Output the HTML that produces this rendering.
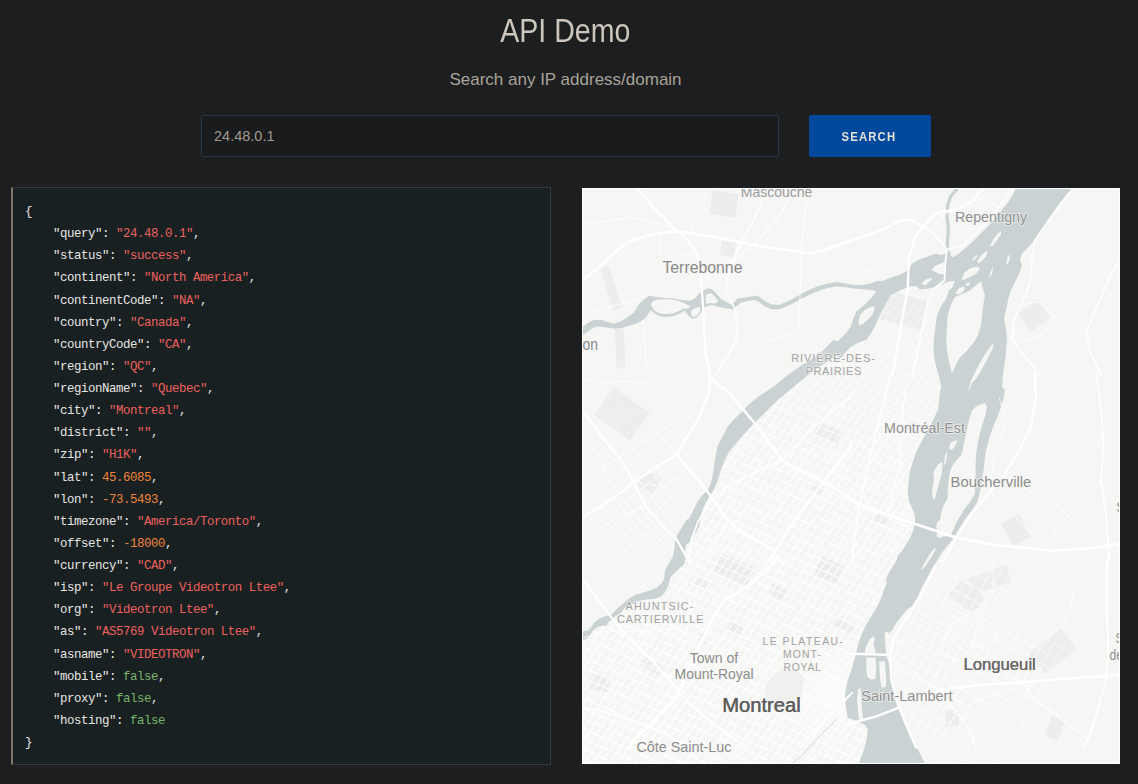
<!DOCTYPE html>
<html lang="en">
<head>
<meta charset="utf-8">
<title>API Demo</title>
<style>
html,body{margin:0;padding:0;}
body{width:1138px;height:784px;overflow:hidden;background:#1c1e20;position:relative;font-family:"Liberation Sans",sans-serif;}
h1{position:absolute;left:0;top:8px;width:1131px;margin:0;text-align:center;font-weight:400;font-size:33.5px;line-height:46px;color:#cdc6bd;white-space:nowrap;}
h1 span{display:inline-block;transform:scaleX(.852);transform-origin:50% 50%;}
.sub{position:absolute;left:0;top:67px;width:1131px;margin:0;text-align:center;font-size:17px;line-height:26px;color:#aaa399;white-space:nowrap;}
.inp{position:absolute;left:201px;top:115px;width:578px;height:42px;box-sizing:border-box;border:1px solid #27364a;border-radius:2px;background:#191b1d;color:#a09990;font-size:14.5px;line-height:41px;padding-left:12px;}
.btn{position:absolute;left:809px;top:115px;width:122px;height:42px;background:#02489c;border-radius:2px;color:#e6e2dc;font-weight:700;font-size:12.8px;letter-spacing:1.3px;line-height:43.5px;text-align:center;}
.btn span{display:inline-block;transform:scaleX(.885);transform-origin:50% 50%;margin-left:-2px}
pre{position:absolute;left:11px;top:187px;width:540px;height:578px;box-sizing:border-box;margin:0;border:1px solid #363c3e;border-left:2px solid #7d7366;background:#182022;color:#e8e6e3;font-family:"Liberation Mono",monospace;font-size:12.4px;letter-spacing:-.441px;line-height:22.13px;padding:13px 0 0 12px;white-space:pre;font-weight:400}
pre b{font-weight:400}
.s{color:#ee605e}.n{color:#ef8439}.k{color:#79b36a}
#map{position:absolute;left:582px;top:188px;width:538px;height:576px;background:#f6f6f4;overflow:hidden;}
#map svg{position:absolute;left:0;top:0;display:block}
</style>
</head>
<body>
<h1><span>API Demo</span></h1>
<p class="sub">Search any IP address/domain</p>
<div class="inp">24.48.0.1</div>
<div class="btn"><span>SEARCH</span></div>
<pre>{
    "query"<b>: <span class="s">"24.48.0.1"</span>,</b>
    "status"<b>: <span class="s">"success"</span>,</b>
    "continent"<b>: <span class="s">"North America"</span>,</b>
    "continentCode"<b>: <span class="s">"NA"</span>,</b>
    "country"<b>: <span class="s">"Canada"</span>,</b>
    "countryCode"<b>: <span class="s">"CA"</span>,</b>
    "region"<b>: <span class="s">"QC"</span>,</b>
    "regionName"<b>: <span class="s">"Quebec"</span>,</b>
    "city"<b>: <span class="s">"Montreal"</span>,</b>
    "district"<b>: <span class="s">""</span>,</b>
    "zip"<b>: <span class="s">"H1K"</span>,</b>
    "lat"<b>: <span class="n">45.6085</span>,</b>
    "lon"<b>: <span class="n">-73.5493</span>,</b>
    "timezone"<b>: <span class="s">"America/Toronto"</span>,</b>
    "offset"<b>: <span class="n">-18000</span>,</b>
    "currency"<b>: <span class="s">"CAD"</span>,</b>
    "isp"<b>: <span class="s">"Le Groupe Videotron Ltee"</span>,</b>
    "org"<b>: <span class="s">"Videotron Ltee"</span>,</b>
    "as"<b>: <span class="s">"AS5769 Videotron Ltee"</span>,</b>
    "asname"<b>: <span class="s">"VIDEOTRON"</span>,</b>
    "mobile"<b>: <span class="k">false</span>,</b>
    "proxy"<b>: <span class="k">false</span>,</b>
    "hosting"<b>: <span class="k">false</span></b>
}</pre>
<div id="map">
<svg width="538" height="576" viewBox="0 0 538 576">
<!--WATER-->
<defs>
<pattern id="ga" width="6.9" height="40" patternUnits="userSpaceOnUse" patternTransform="rotate(35)"><rect x="0" y="0" width="1" height="40" fill="#fff"/></pattern>
<pattern id="gb" width="40" height="9.3" patternUnits="userSpaceOnUse" patternTransform="rotate(24)"><rect x="0" y="0" width="40" height="1" fill="#fff"/></pattern>
<pattern id="gc" width="13" height="40" patternUnits="userSpaceOnUse" patternTransform="rotate(52)"><rect x="0" y="0" width="1" height="40" fill="#fff"/></pattern>
<pattern id="gd" width="40" height="15" patternUnits="userSpaceOnUse" patternTransform="rotate(52)"><rect x="0" y="0" width="40" height="1" fill="#fff"/></pattern>
<pattern id="ge" width="9" height="40" patternUnits="userSpaceOnUse" patternTransform="rotate(28)"><rect x="0" y="0" width="1" height="40" fill="#fff"/></pattern>
<pattern id="gf" width="40" height="12" patternUnits="userSpaceOnUse" patternTransform="rotate(28)"><rect x="0" y="0" width="40" height="1" fill="#fff"/></pattern>
<clipPath id="cisl"><path d="M0 600 L0 451.4 L-0.5 453.3 L3.2 451.6 L6.4 449.5 L8.6 446.3 L10.7 443.1 L12.9 440.9 L16.1 438.8 L20.4 437.7 L24.6 437.7 L26.8 433.4 L31.1 431.8 L32.1 429.1 L37.5 425.9 L40.7 422.7 L42.9 419.5 L50 416.3 L55.7 413.4 L61.4 412 L67.1 411.3 L74.3 410.6 L80 407.7 L84.3 402 L87.1 394.9 L88.6 389.1 L92.9 384.9 L97.1 380.6 L102.1 376.3 L103.6 370.6 L102.9 363.4 L104.3 356.3 L108.6 354 L112.9 346.3 L117.1 339.1 L118.6 330.6 L120 323.4 L122.9 316.3 L127.1 309.1 L130.7 303.4 L134.3 296.3 L137.1 287.7 L140 279.1 L143.6 270.6 L147.1 263.4 L148.6 262 L155.7 253.4 L162.9 244.9 L170 237.7 L178.6 229.1 L187.1 220.6 L195.7 212 L202.9 206.3 L211.4 199.1 L220 192 L228.6 184.9 L237.1 179.1 L245.7 173.4 L254.3 167.7 L258.6 170.6 L262.9 164.9 L268.6 159.1 L275.7 154.9 L284.3 152 L288.6 145.7 L292.9 138.6 L297.1 128.6 L302.9 117.1 L308.6 107.1 L317.1 102.9 L327.1 98.6 L334.3 97.9 L337.9 101.4 L345.7 100.7 L354.3 98.6 L362.9 95 L370 92.9 L372.9 92.9 L370 100 L367.1 102 L364.3 110.6 L358.6 119.1 L355 127.7 L353.6 137.7 L352.1 149.1 L351.4 159.1 L352.1 169.1 L354.3 179.1 L357.1 189.1 L359.3 199.1 L357.9 204 L357.1 212.6 L356.4 221.1 L352.9 228.3 L349.3 235.4 L342.9 246.9 L338.6 255.4 L334.3 264 L330.7 274 L327.9 284 L326.4 295.4 L325.7 306 L327.1 313.1 L330 320.3 L332.9 327.4 L332.9 334.6 L331.4 341.7 L328.6 348.9 L324.3 356 L320 363.1 L315.7 367.4 L315 371.7 L311.4 377.4 L307.1 384.6 L303.6 391.7 L305 394.6 L301.4 403.1 L300 408 L297.1 415.1 L292.9 422.3 L288.6 429.4 L284.3 436.6 L280.7 443.7 L277.9 450.9 L275.7 458 L274.3 465.1 L270 479.7 L265.7 492.6 L263.6 502.6 L262.9 511.1 L264.3 521.1 L265.7 529.7 L277.1 534 L282.9 536.9 L285.7 541.1 L285 549.7 L282.9 558.3 L280 566.9 L276.4 576.9 L270 600Z"/></clipPath>
<clipPath id="clav"><path d="M0 441 L-0.5 443.6 L2.1 443.1 L5.4 442.5 L8.6 439.9 L10.7 436.6 L13.9 432.9 L18.2 430.2 L23.6 428.1 L28.9 427 L32.1 423.8 L36.4 419.5 L47.1 410.6 L52.9 407 L60 404.9 L67.1 402.7 L74.3 399.9 L80 394.9 L82.1 390.6 L82.9 382 L86.4 376.3 L90.7 369.1 L92.6 360.6 L92.9 353.4 L95.7 346.3 L100 339.1 L104.3 332 L107.1 330.6 L111.4 322 L115.7 313.4 L120 307.7 L125.7 302 L128.6 296.3 L130.7 287.7 L132.1 277.7 L133.6 267.7 L135.7 257.7 L140 249.1 L144.3 242 L144.3 240.6 L150 233.4 L158.6 224.9 L167.1 216.3 L175.7 209.1 L184.3 203.4 L192.9 197.7 L201.4 190.6 L208.6 184.9 L217.1 179.1 L225.7 173.4 L232.9 169.1 L240 163.4 L245.7 157.7 L251.4 152 L255.7 153.4 L262.9 146.3 L268.6 139.1 L271.4 130.6 L274.3 123.4 L281.4 117.7 L288.6 110.6 L295 102.7 L308.6 107.1 L-0.7 147.7 L4.3 144.9 L10 140.6 L15.7 138.4 L21.4 139.1 L27.1 139.9 L32.9 140.6 L40 139.9 L47.1 137.7 L55.7 134.9 L62.9 130.6 L67.1 124.9 L68.6 122 L72.9 125.6 L78.6 128.4 L85.7 129.1 L92.9 127.7 L98.6 124.9 L102.9 122.7 L105.7 127 L110 130.6 L114.3 129.9 L118.6 124.9 L121.4 119.9 L124.3 118.4 L130 117 L137.1 119.1 L144.3 120.6 L151.4 121.3 L154.3 118.4 L158.6 114.9 L165.7 112.7 L172.9 112 L177.1 114.1 L182.9 118.4 L190 121.3 L197.1 121.3 L204.3 118.4 L211.4 114.9 L220 110.6 L228.6 106.3 L237.1 102.7 L245.7 99.9 L254.3 98.4 L262.9 99.1 L271.4 100.6 L280 101.3 L288.6 102 L295 103.4 L308.6 107.1 L317.1 102.9 L327.1 98.6 L334.3 97.9 L337.9 101.4 L345.7 100.7 L354.3 98.6 L362.9 95 L370 92.9 L0 148Z"/></clipPath>
<clipPath id="csou"><path d="M343.6 576.9 L338.6 566.9 L332.9 555.4 L327.1 544 L322.9 534 L318.6 524 L315.7 515.4 L313.6 505.4 L311.4 495.4 L309.3 485.4 L307.1 475.4 L304.3 468 L303.6 459.4 L302.9 450.9 L302.9 443.7 L307.1 445.1 L310 442.3 L314.3 435.1 L318.6 429.4 L324.3 422.3 L330 418 L335.7 408.9 L340 398.9 L345.7 388.9 L350 380.3 L355.7 371.7 L360 364.6 L365.7 357.4 L371.4 350.3 L375.7 343.1 L380 336 L385.7 327.4 L391.4 320.3 L395.7 313.1 L399.3 296.9 L400.7 288.3 L402.1 278.3 L402.9 268.3 L405 258.3 L407.9 248.3 L411.4 238.3 L415.7 228.3 L418.6 219.7 L421.4 211.1 L422.1 207.7 L422.9 202 L420 199.1 L420.7 189.1 L422.1 179.1 L423.6 169.1 L424.3 159.1 L425 149.1 L423.6 139.1 L422.1 130.6 L424.3 120.6 L426.4 110.6 L428.6 102.9 L432.9 94.3 L437.1 85.7 L440 77.1 L437.9 71.4 L440 65.7 L445.7 60 L452.9 51.4 L458.6 42.9 L464.3 34.3 L470 25.7 L477.1 15.7 L484.3 7.1 L490 0 L560 -10 L560 600 L345 600Z"/></clipPath>
<linearGradient id="fade" x1="0.25" y1="1" x2="0.75" y2="0"><stop offset="0" stop-color="#fff" stop-opacity="1"/><stop offset=".55" stop-color="#fff" stop-opacity=".9"/><stop offset=".8" stop-color="#fff" stop-opacity=".25"/><stop offset="1" stop-color="#fff" stop-opacity="0"/></linearGradient>
<mask id="misl"><rect x="0" y="0" width="538" height="576" fill="url(#fade)"/></mask>
<radialGradient id="fl" cx="60" cy="330" r="150" gradientUnits="userSpaceOnUse"><stop offset="0" stop-color="#fff" stop-opacity=".8"/><stop offset="1" stop-color="#fff" stop-opacity="0"/></radialGradient>
<mask id="mlav"><rect x="0" y="0" width="538" height="576" fill="url(#fl)"/></mask>
<radialGradient id="fs" cx="380" cy="470" r="130" gradientUnits="userSpaceOnUse"><stop offset="0" stop-color="#fff" stop-opacity=".85"/><stop offset=".6" stop-color="#fff" stop-opacity=".6"/><stop offset="1" stop-color="#fff" stop-opacity="0"/></radialGradient>
<mask id="msou"><rect x="0" y="0" width="538" height="576" fill="url(#fs)"/></mask>
</defs>
<path d="M139.9 365.3 L172.5 380.5 L164.1 398.7 L131.5 383.5Z" fill="#eceeec"/>
<path d="M240.4 367.9 L262.1 378 L253.6 396.1 L231.9 386Z" fill="#eceeec"/>
<path d="M148.6 433 L161.2 438.9 L157.4 447 L144.8 441.1Z" fill="#eceeec"/>
<path d="M10.5 485.6 L28.3 488.7 L25.5 504.4 L7.7 501.3Z" fill="#eceeec"/>
<path d="M379.9 391.7 L402.9 411 L390.1 426.3 L367.1 407Z" fill="#eceeec"/>
<path d="M386.1 390.4 L423.7 376.7 L429.9 393.6 L392.3 407.3Z" fill="#eceeec"/>
<path d="M447.2 465.1 L478.8 440.4 L494.8 460.9 L463.2 485.6Z" fill="#eceeec"/>
<path d="M31.7 199.5 L67.8 224.7 L48.3 252.5 L12.2 227.3Z" fill="#eceeec"/>
<path d="M63.7 281.7 L79.3 290.7 L70.3 306.3 L54.7 297.3Z" fill="#eceeec"/>
<path d="M237.2 233.2 L260.7 244.1 L254.8 256.8 L231.3 245.9Z" fill="#eceeec"/>
<path d="M18.3 80.3 L26.9 77.6 L39.7 119.7 L31.1 122.4Z" fill="#eceeec"/>
<path d="M32.3 134.3 L41.3 133.8 L43.7 179.7 L34.7 180.2Z" fill="#eceeec"/>
<path d="M131.3 1.9 L156.9 6.4 L152.7 30.1 L127.1 25.6Z" fill="#eceeec"/>
<path d="M140.5 50.9 L154.3 53.3 L151.5 69.1 L137.7 66.7Z" fill="#eceeec"/>
<path d="M418.8 335.7 L436.2 325.7 L449.2 348.3 L431.8 358.3Z" fill="#eceeec"/>
<path d="M302.7 101.6 L347.1 113.5 L339.3 142.4 L294.9 130.5Z" fill="#eceeec"/>
<path d="M191.3 395.2 L205.8 401.9 L200.7 412.8 L186.2 406.1Z" fill="#eceeec"/>
<path d="M250 436.8 L255 428.2 L274 439.2 L269 447.8Z" fill="#eceeec"/>
<path d="M63.8 468.7 L81.2 478.7 L76.2 487.3 L58.8 477.3Z" fill="#eceeec"/>
<path d="M116.3 388.8 L127.1 393.9 L123.7 401.2 L112.9 396.1Z" fill="#eceeec"/>
<path d="M295.1 322.9 L308.3 327.7 L304.9 337.1 L291.7 332.3Z" fill="#eceeec"/>
<path d="M435.9 125.9 L455.5 112.1 L468.1 130.1 L448.5 143.9Z" fill="#eceeec"/>
<path d="M363 521 L377 521 L377 539 L363 539Z" fill="#eceeec"/>
<path d="M470.2 527.3 L483.3 532.1 L475.8 552.7 L462.7 547.9Z" fill="#eceeec"/>
<path d="M117.2 444.3 L126.2 448.5 L122.8 455.7 L113.8 451.5Z" fill="#eceeec"/>
<path d="M231.3 293.8 L242.1 298.9 L238.7 306.2 L227.9 301.1Z" fill="#eceeec"/>
<g clip-path="url(#cisl)"><g mask="url(#misl)"><rect width="538" height="576" fill="url(#ga)"/><rect width="538" height="576" fill="url(#gb)"/></g></g>
<g clip-path="url(#clav)"><g mask="url(#mlav)"><rect width="538" height="576" fill="url(#gc)"/><rect width="538" height="576" fill="url(#gd)"/></g></g>
<g clip-path="url(#csou)"><g mask="url(#msou)"><rect width="538" height="576" fill="url(#ge)"/><rect width="538" height="576" fill="url(#gf)"/></g></g>
<radialGradient id="dt" cx="252" cy="505" r="55" gradientUnits="userSpaceOnUse"><stop offset="0" stop-color="#fff" stop-opacity=".55"/><stop offset="1" stop-color="#fff" stop-opacity="0"/></radialGradient><ellipse cx="252" cy="505" rx="38" ry="62" transform="rotate(32 252 505)" fill="url(#dt)"/>
<path d="M183 497 L195 484 L212 480 L222 490 L220 506 L208 520 L192 522 L184 512Z" fill="#f0f1ef"/>
<path d="M490 0 L484.3 7.1 L477.1 15.7 L470 25.7 L464.3 34.3 L458.6 42.9 L452.9 51.4 L445.7 60 L440 65.7 L437.9 71.4 L440 77.1 L437.1 85.7 L432.9 94.3 L428.6 102.9 L426.4 110.6 L424.3 120.6 L422.1 130.6 L423.6 139.1 L425 149.1 L424.3 159.1 L423.6 169.1 L422.1 179.1 L420.7 189.1 L420 199.1 L422.9 202 L422.1 207.7 L421.4 211.1 L418.6 219.7 L415.7 228.3 L411.4 238.3 L407.9 248.3 L405 258.3 L402.9 268.3 L402.1 278.3 L400.7 288.3 L399.3 296.9 L395.7 313.1 L391.4 320.3 L385.7 327.4 L380 336 L375.7 343.1 L371.4 350.3 L365.7 357.4 L360 364.6 L355.7 371.7 L350 380.3 L345.7 388.9 L340 398.9 L335.7 408.9 L330 418 L324.3 422.3 L318.6 429.4 L314.3 435.1 L310 442.3 L307.1 445.1 L302.9 443.7 L302.9 450.9 L303.6 459.4 L304.3 468 L307.1 475.4 L309.3 485.4 L311.4 495.4 L313.6 505.4 L315.7 515.4 L318.6 524 L322.9 534 L327.1 544 L332.9 555.4 L338.6 566.9 L343.6 576.9 L276.4 576.9 L280 566.9 L282.9 558.3 L285 549.7 L285.7 541.1 L282.9 536.9 L277.1 534 L265.7 529.7 L264.3 521.1 L262.9 511.1 L263.6 502.6 L265.7 492.6 L270 479.7 L274.3 465.1 L275.7 458 L277.9 450.9 L280.7 443.7 L284.3 436.6 L288.6 429.4 L292.9 422.3 L297.1 415.1 L300 408 L301.4 403.1 L305 394.6 L303.6 391.7 L307.1 384.6 L311.4 377.4 L315 371.7 L315.7 367.4 L320 363.1 L324.3 356 L328.6 348.9 L331.4 341.7 L332.9 334.6 L332.9 327.4 L330 320.3 L327.1 313.1 L325.7 306 L326.4 295.4 L327.9 284 L330.7 274 L334.3 264 L338.6 255.4 L342.9 246.9 L349.3 235.4 L352.9 228.3 L356.4 221.1 L357.1 212.6 L357.9 204 L359.3 199.1 L357.1 189.1 L354.3 179.1 L352.1 169.1 L351.4 159.1 L352.1 149.1 L353.6 137.7 L355 127.7 L358.6 119.1 L364.3 110.6 L367.1 102 L370 100 L372.9 92.9 L370 70.7 L372.9 68.6 L380 62.9 L387.1 57.1 L394.3 50 L401.4 42.9 L407.1 37.1 L417.1 25.7 L421.4 20 L427.1 12.9 L431.4 5.7 L434.3 -0.7Z" fill="#cad2d3"/>
<path d="M-0.7 139.9 L5.7 134.9 L11.4 132 L20 132 L25.7 134.1 L31.4 135.6 L38.6 133.4 L45.7 129.1 L51.4 124.9 L55.7 117.7 L61.4 112 L67.1 107.7 L74.3 109.1 L82.9 109.9 L91.4 110.6 L100 112 L108.6 112.7 L112.9 110.6 L117.1 105.6 L121.4 102.7 L125.7 100.6 L130 101.3 L134.3 105.6 L138.6 110.6 L144.3 114.1 L150 117 L152.9 113.4 L155.7 110.6 L160 109.9 L168.6 108.4 L175.7 107.7 L181.4 112 L188.6 116.3 L197.1 117 L204.3 114.1 L211.4 110.6 L220 105.6 L228.6 101.3 L237.1 97.7 L245.7 95.6 L254.3 94.1 L262.9 95.6 L271.4 97 L280 97 L288.6 95.6 L295.7 92.7 L300 92.9 L310 89.3 L320 85.7 L327.1 81.4 L330 75.7 L337.1 71.4 L345.7 68.6 L352.9 65.7 L360 67.1 L365.7 64.3 L368.6 67.1 L370.7 69.3 L375.7 67.1 L376.4 93.6 L372.9 93.1 L370 92.9 L362.9 95 L354.3 98.6 L345.7 100.7 L337.9 101.4 L334.3 97.9 L327.1 98.6 L317.1 102.9 L308.6 107.1 L295 103.4 L288.6 102 L280 101.3 L271.4 100.6 L262.9 99.1 L254.3 98.4 L245.7 99.9 L237.1 102.7 L228.6 106.3 L220 110.6 L211.4 114.9 L204.3 118.4 L197.1 121.3 L190 121.3 L182.9 118.4 L177.1 114.1 L172.9 112 L165.7 112.7 L158.6 114.9 L154.3 118.4 L151.4 121.3 L144.3 120.6 L137.1 119.1 L130 117 L124.3 118.4 L121.4 119.9 L118.6 124.9 L114.3 129.9 L110 130.6 L105.7 127 L102.9 122.7 L98.6 124.9 L92.9 127.7 L85.7 129.1 L78.6 128.4 L72.9 125.6 L68.6 122 L67.1 124.9 L62.9 130.6 L55.7 134.9 L47.1 137.7 L40 139.9 L32.9 140.6 L27.1 139.9 L21.4 139.1 L15.7 138.4 L10 140.6 L4.3 144.9 L-0.7 147.7Z" fill="#cad2d3"/>
<path d="M-0.5 443.6 L2.1 443.1 L5.4 442.5 L8.6 439.9 L10.7 436.6 L13.9 432.9 L18.2 430.2 L23.6 428.1 L28.9 427 L32.1 423.8 L36.4 419.5 L47.1 410.6 L52.9 407 L60 404.9 L67.1 402.7 L74.3 399.9 L80 394.9 L82.1 390.6 L82.9 382 L86.4 376.3 L90.7 369.1 L92.6 360.6 L92.9 353.4 L95.7 346.3 L100 339.1 L104.3 332 L107.1 330.6 L111.4 322 L115.7 313.4 L120 307.7 L125.7 302 L128.6 296.3 L130.7 287.7 L132.1 277.7 L133.6 267.7 L135.7 257.7 L140 249.1 L144.3 242 L144.3 240.6 L150 233.4 L158.6 224.9 L167.1 216.3 L175.7 209.1 L184.3 203.4 L192.9 197.7 L201.4 190.6 L208.6 184.9 L217.1 179.1 L225.7 173.4 L232.9 169.1 L240 163.4 L245.7 157.7 L251.4 152 L255.7 153.4 L262.9 146.3 L268.6 139.1 L271.4 130.6 L274.3 123.4 L281.4 117.7 L288.6 110.6 L295 102.7 L308.6 107.1 L302.9 117.1 L297.1 128.6 L292.9 138.6 L288.6 145.7 L284.3 152 L275.7 154.9 L268.6 159.1 L262.9 164.9 L258.6 170.6 L254.3 167.7 L245.7 173.4 L237.1 179.1 L228.6 184.9 L220 192 L211.4 199.1 L202.9 206.3 L195.7 212 L187.1 220.6 L178.6 229.1 L170 237.7 L162.9 244.9 L155.7 253.4 L148.6 262 L147.1 263.4 L143.6 270.6 L140 279.1 L137.1 287.7 L134.3 296.3 L130.7 303.4 L127.1 309.1 L122.9 316.3 L120 323.4 L118.6 330.6 L117.1 339.1 L112.9 346.3 L108.6 354 L104.3 356.3 L102.9 363.4 L103.6 370.6 L102.1 376.3 L97.1 380.6 L92.9 384.9 L88.6 389.1 L87.1 394.9 L84.3 402 L80 407.7 L74.3 410.6 L67.1 411.3 L61.4 412 L55.7 413.4 L50 416.3 L42.9 419.5 L40.7 422.7 L37.5 425.9 L32.1 429.1 L31.1 431.8 L26.8 433.4 L24.6 437.7 L20.4 437.7 L16.1 438.8 L12.9 440.9 L10.7 443.1 L8.6 446.3 L6.4 449.5 L3.2 451.6 L-0.5 453.3Z" fill="#cad2d3"/>
<path d="M375.7 0 L368.6 8.6 L365.7 17.1 L365 28.6 L366.4 40 L365.7 51.4 L365 60 L367.1 65.7" fill="none" stroke="#cad2d3" stroke-width="3.2" stroke-linecap="round" stroke-linejoin="round"/>
<path d="M370 175.6 L377.1 170.6 L385.7 164.9" fill="none" stroke="#cad2d3" stroke-width="1.2" stroke-linecap="round" stroke-linejoin="round"/>
<path d="M372.9 102 L377.1 106.3 L387.1 103.4" fill="none" stroke="#cad2d3" stroke-width="2" stroke-linecap="round" stroke-linejoin="round"/>
<path d="M377.9 265.4 L385.7 266.9 L394.3 265.4" fill="none" stroke="#cad2d3" stroke-width="1.5" stroke-linecap="round" stroke-linejoin="round"/>
<path d="M191.4 592.6 L220 566.9 L254.3 531.1" fill="none" stroke="#cad2d3" stroke-width="1.3" stroke-opacity=".55" stroke-linecap="round" stroke-linejoin="round"/>
<path d="M68.6 116.3 L71.4 112.7 L77.1 111.3 L85.7 111.3 L92.9 112 L100 114.1 L105.7 117 L108.6 118.4 L105.7 120.6 L101.4 120.6 L97.1 122.7 L91.4 125.6 L84.3 126.3 L77.9 125.6 L72.9 122.7 L70 119.1Z" fill="#f6f6f4"/>
<path d="M109.3 122.7 L112.9 119.9 L117.9 119.1 L118.6 122 L116.4 126.3 L112.1 129.1 L109.3 127.7Z" fill="#f6f6f4"/>
<path d="M123.6 107 L128.6 104.9 L132.9 108.4 L136.4 113.4 L132.9 115.6 L127.1 115.1 L124 116.3Z" fill="#f6f6f4"/>
<path d="M349.3 82.1 L352.9 77.9 L360 75 L363.6 73.6 L362.1 81.4 L361.7 86.4 L357.1 85.7 L352.9 83.6Z" fill="#f6f6f4"/>
<path d="M340 95 L342.9 92.1 L350 89.7 L349.3 92.1 L343.6 97.1 L340.7 97.1Z" fill="#f6f6f4"/>
<path d="M276.4 133.4 L278.6 126.3 L282.9 122 L288.6 119.1 L292.9 118.4 L291.4 124.9 L287.1 130.6 L281.4 135.6 L277.1 137.7Z" fill="#f6f6f4"/>
<path d="M407.9 57.9 L411.4 51.4 L415.7 45.7 L419.3 42.9 L418.6 47.1 L414.3 52.9 L410.7 57.9Z" fill="#f6f6f4"/>
<path d="M395 73.6 L398.6 67.9 L402.9 64.3 L405.7 62.9 L404.3 67.9 L400 72.9 L396.4 75Z" fill="#f6f6f4"/>
<path d="M390 72.1 L394.3 67.1 L395.7 67.9 L391.4 72.9Z" fill="#f6f6f4"/>
<path d="M379.3 91.4 L382.9 84.3 L388.6 80 L395.7 78.6 L397.9 80.7 L394.3 85.7 L387.1 89.3 L381.4 92.1Z" fill="#f6f6f4"/>
<path d="M424.3 75.7 L425.7 68.6 L427.4 66.4 L427.9 70.7 L425.7 76.4Z" fill="#f6f6f4"/>
<path d="M407.1 88.6 L410 80 L411.1 79.3 L410 85.7 L407.9 89.3Z" fill="#f6f6f4"/>
<path d="M373.6 105 L377.1 100 L382.1 98.6 L382.9 101.4 L378.6 105.7 L375 106.4Z" fill="#f6f6f4"/>
<path d="M382.9 97.1 L385.7 94.6 L388.6 95 L386.4 97.9Z" fill="#f6f6f4"/>
<path d="M399.3 93.6 L394.3 97.1 L387.1 102.9 L372.9 109.1 L368.6 117.7 L365.7 127.7 L365 139.1 L364.3 150.6 L365 162 L367.1 173.4 L370 185.6 L372.9 179.1 L377.1 170.6 L384.3 163.4 L391.4 154.9 L395.7 147.7 L398.6 139.1 L400 127.7 L401.4 116.3 L402.9 107.7 L400.7 100Z" fill="#f6f6f4"/>
<path d="M386.4 202 L388.6 193.4 L395.7 179.1 L402.9 166.3 L410.7 155.6 L411.4 159.1 L405.7 170.6 L398.6 183.4 L394.3 190.6 L390 194.9 L387.1 202.7Z" fill="#f6f6f4"/>
<path d="M402.9 214.7 L405 218.3 L403.6 226.9 L400.7 235.4 L397.9 245.4 L395.7 255.4 L394.3 265.4 L393.6 275.4 L393.6 285.4 L392.9 295.4 L392.9 306 L388.6 313.1 L382.9 320.3 L378.6 327.4 L374.3 334.6 L371.4 341.7 L368.6 347.4 L360 348.9 L357.9 350.3 L354.3 348.1 L355.7 344.6 L354.3 338.9 L355 334.6 L357.9 331.7 L359.3 324.6 L361.4 317.4 L365.7 310.3 L365.7 301.1 L367.1 289.7 L367.9 284 L370 278.3 L374.3 272.6 L379.3 266.9 L380.7 261.1 L382.9 251.1 L385 241.1 L387.1 231.1 L390 222.6 L394.3 218.3Z" fill="#f6f6f4"/>
<path d="M350.7 310.4 L350 302.6 L352.1 292.6 L351.4 284 L355.7 276.9 L359.3 274 L360.7 275.4 L360 284 L357.9 292.6 L355 302.6 L352.9 311.1Z" fill="#f6f6f4"/>
<path d="M367.1 260.4 L368.6 254.7 L374.3 251.9 L375 254 L371.4 260.4 L368.6 261.9Z" fill="#f6f6f4"/>
<path d="M362.1 276.1 L362.9 268.3 L364.3 264 L365.4 264.7 L364.3 272.6 L362.9 276.9Z" fill="#f6f6f4"/>
<path d="M339.3 381 L344.3 371.7 L350 363.1 L353.1 359.6 L353.6 361.7 L348.6 370.3 L342.9 378.9 L340 381.7Z" fill="#f6f6f4"/>
<path d="M282.9 463.7 L284.3 458 L287.9 450.9 L291.4 448 L292.9 450.9 L291.4 456.6 L293.6 462.3 L293.6 465.1 L282.9 465.1Z" fill="#f6f6f4"/>
<path d="M284.3 469.4 L293.6 469.4 L294.3 479.4 L293.6 490.9 L288.6 491.6 L285 488 L284.3 479.4Z" fill="#f6f6f4"/>
<path d="M297.1 473.7 L302.9 473 L303.6 482.3 L304.3 493.7 L303.6 499.4 L299.3 499.4 L297.9 488Z" fill="#f6f6f4"/>
<path d="M276.4 501.1 L278.6 499.7 L279.3 511.1 L280 521.1 L281.4 532.6 L277.1 532.6 L275.7 521.1 L275 511.1Z" fill="#f6f6f4"/>
<!--/WATER-->
<!--ROADS-->
<g fill="none" stroke="#fff" stroke-linecap="round" stroke-linejoin="round">
<path d="M78.3 45.1 L77.1 66.4 L90.2 68.8 L113.9 64.1" stroke-width="0.9" stroke-opacity=".85"/>
<path d="M33.2 64.1 L40.3 54.6 L51 62.9 L56.9 59.3" stroke-width="0.9" stroke-opacity=".85"/>
<path d="M111.5 46.3 L110.3 33.2 L118.6 19 L123.4 4.7" stroke-width="0.9" stroke-opacity=".85"/>
<path d="M64.1 186 L62.9 142.3 L60.5 132.9" stroke-width="0.9" stroke-opacity=".85"/>
<path d="M0 135.2 L11.9 123.4 L30.8 118.6 L54.6 111.5 L71.2 104.4" stroke-width="0.9" stroke-opacity=".85"/>
<path d="M326.9 68.8 L303.2 75.9 L284.2 83 L270 85.4" stroke-width="0.9" stroke-opacity=".85"/>
<path d="M0 190.7 L21.4 195.5 L42.7 193.1 L66.4 195.5 L78.3 207.4 L104.4 250.1" stroke-width="0.9" stroke-opacity=".85"/>
<path d="M52.2 293.9 L75.9 297.5 L94.9 290.4 L111.5 271.4" stroke-width="0.9" stroke-opacity=".85"/>
<path d="M417.1 209.7 L424.2 233.4 L412.3 264.3 L407.6 304.6" stroke-width="0.9" stroke-opacity=".85"/>
<path d="M469.3 362.7 L474 337.8 L497.8 318.9 L519.1 292.8" stroke-width="0.9" stroke-opacity=".85"/>
<path d="M402.9 419.4 L393.4 443.2 L391 462.2 L402.9 471.6" stroke-width="0.9" stroke-opacity=".85"/>
<path d="M326.9 426.6 L350.7 438.4 L381.5 452.7 L402.9 462.2" stroke-width="0.9" stroke-opacity=".85"/>
<path d="M410 372 L412.3 400.5 L402.9 419.4 L383.9 426.6 L369.6 438.4 L360.2 462.2 L353 500.1" stroke-width="0.9" stroke-opacity=".85"/>
<path d="M474 372 L493 395.7 L488.3 424.2 L474 443.2 L455.1 462.2 L440.8 494.2" stroke-width="0.9" stroke-opacity=".85"/>
<path d="M493 395.7 L525 426.6" stroke-width="0.9" stroke-opacity=".85"/>
<path d="M374.4 523.8 L402.9 509.6 L421.8 504.9 L440.8 494.2" stroke-width="0.9" stroke-opacity=".85"/>
<path d="M417.1 514.3 L440.8 535.7 L459.8 552.3" stroke-width="0.9" stroke-opacity=".85"/>
<path d="M224.2 13 L221.8 35.6 L219.5 59.3 L218.3 99.6 L217.1 142.3 L227.8 156.6 L239.6 166.1" stroke-width="1" stroke-opacity=".85"/>
<path d="M134 186 L161.3 166.1 L189.8 151.8 L217.1 142.3" stroke-width="1" stroke-opacity=".85"/>
<path d="M0 35.6 L23.7 33.2 L47.4 29.7 L78.3 35.6 L97.3 43.4" stroke-width="1" stroke-opacity=".85"/>
<path d="M466.9 35.6 L488.3 56.9 L507.2 73.5 L526.2 90.2 L540 99.6" stroke-width="1" stroke-opacity=".85"/>
<path d="M440.8 116.3 L457.4 113.9 L471.7 128.1 L459.8 147.1 L440.8 154.2 L431.3 142.3" stroke-width="1" stroke-opacity=".85"/>
<path d="M471.7 128.1 L490.6 142.3 L504.9 147.1" stroke-width="1" stroke-opacity=".85"/>
<path d="M388.6 14.2 L402.9 9.5 L417.1 19" stroke-width="1" stroke-opacity=".85"/>
<path d="M348.3 42.7 L362.5 26.1 L374.4 21.4" stroke-width="1" stroke-opacity=".85"/>
<path d="M0 285.6 L23.7 276.2 L47.4 264.3 L71.2 247.7 L90.2 235.8 L106.8 216.8 L123.4 209.7" stroke-width="1" stroke-opacity=".85"/>
<path d="M78.3 245.3 L94.9 266.7" stroke-width="1" stroke-opacity=".85"/>
<path d="M0 247.7 L14.2 264.3 L23.7 285.6 L38 309.4 L59.3 333.1 L78.3 352.1" stroke-width="1" stroke-opacity=".85"/>
<path d="M0 352.1 L21.4 337.8 L42.7 326 L64.1 318.9" stroke-width="1" stroke-opacity=".85"/>
<path d="M147.1 333.1 L132.9 356.8 L123.4 373.4" stroke-width="1" stroke-opacity=".85"/>
<path d="M466.9 197.9 L495.4 228.7 L519.1 257.2 L540 280.9" stroke-width="1" stroke-opacity=".85"/>
<path d="M407.6 304.6 L426.6 318.9 L440.8 337.8 L469.3 362.7" stroke-width="1" stroke-opacity=".85"/>
<path d="M421.8 288 L450.3 304.6 L476.4 318.9 L497.8 337.8" stroke-width="1" stroke-opacity=".85"/>
<path d="M309.1 450.3 L341.2 459.8 L372 471.6 L402.9 481.1 L440.8 494.2" stroke-width="1" stroke-opacity=".85"/>
<path d="M341.2 402.8 L369.6 419.4 L393.4 433.7 L421.8 450.3 L440.8 462.2" stroke-width="1" stroke-opacity=".85"/>
<path d="M325.8 184.8 L321 221.6 L317.4 276.2 L305.6 328.3" stroke-width="1.2" stroke-opacity=".85"/>
<path d="M0 450.3 L23.7 443.2 L59.3 443.2 L94.9 440.8 L118.6 455" stroke-width="1.2" stroke-opacity=".85"/>
<path d="M206.4 13 L194.5 30.8 L180.3 47.4 L170.8 56.9 L156.6 68.8 L137.6 80.7 L123.4 90.2" stroke-width="1.4" stroke-opacity=".85"/>
<path d="M309.1 471.6 L331.7 483.5 L353 500.1 L374.4 523.8 L388.6 542.8 L393.4 559.4" stroke-width="1.4" stroke-opacity=".85"/>
<path d="M440.8 494.2 L450.3 509.6 L469.3 523.8 L488.3 538.1 L507.2 552.3" stroke-width="1.4" stroke-opacity=".85"/>
<path d="M364.9 61.7 L381.5 56.9 L402.9 35.6 L417.1 19 L431.3 -1.2" stroke-width="1.5"/>
<path d="M540 68.8 L528.6 87.8 L516.7 113.9 L504.9 142.3 L507.2 161.3 L519.1 187.4" stroke-width="1.5"/>
<path d="M182.7 7.1 L175.6 23.7 L166.1 42.7 L156.6 59.3 L151.8 71.2 L145.9 87.8 L143.5 102 L148.3 111.5 L153 121 L155.4 137.6 L154.2 151.8 L147.1 166.1 L138.8 177.9 L134 186" stroke-width="1.6"/>
<path d="M493 -1.2 L478.8 16.6 L464.5 35.6 L452.7 52.2 L450.3 68.8 L447.9 94.9 L440.8 113.9 L431.3 132.9 L430.1 151.8 L440.8 166.1 L452.7 180.3 L457.4 187.4" stroke-width="1.6"/>
<path d="M309.1 184.8 L303.2 209.7 L293.7 245.3 L284.2 285.6 L277.1 318.9 L272.4 352.1 L270 373.4" stroke-width="1.6"/>
<path d="M330.5 187.4 L338.8 147.1 L345.9 113.9 L353 99.6 L362.5 92.5 L363.7 71.2 L364.9 61.7 L360.2 54.6 L348.3 42.7 L338.8 35.6" stroke-width="1.8"/>
<path d="M199.3 272.6 L170.8 285.6 L140 302.3 L128.1 314.1 L116.3 333.1 L109.1 352.1 L106.8 373.4" stroke-width="1.8"/>
<path d="M270 207.4 L246.7 226.3 L223 247.7 L199.3 272.6" stroke-width="1.8"/>
<path d="M514.4 184.8 L519.1 221.6 L521.5 257.2 L519.1 292.8 L523.9 328.3 L527.4 373.4" stroke-width="1.8"/>
<path d="M-1.2 519.1 L23.7 523.8 L59.3 535.7 L78.3 542.8 L106.8 559.4" stroke-width="1.8"/>
<path d="M525 370.8 L525 419.4 L526.2 466.9 L523.9 490.6 L516.7 519.1 L507.2 547.6 L502.5 559.4" stroke-width="1.8"/>
<path d="M97.3 504.9 L111.5 519.1 L128.1 533.3 L147.1 547.6 L166.1 559.4" stroke-width="2"/>
<path d="M270 504.9 L251.5 523.8 L232.5 542.8 L218.3 559.4" stroke-width="2"/>
<path d="M53.4 -1.2 L71.2 19 L92.5 40.3 L104.4 51 L113.9 64.1 L118.6 80.7 L119.8 99.6 L121 118.6 L122.2 142.3 L123.4 166.1 L128.1 186" stroke-width="2.2"/>
<path d="M0 221.6 L19 247.7 L35.6 267.9 L47.4 285.6 L54.6 299.9 L64.1 318.9 L83 340.2 L94.9 352.1 L104.4 368.7" stroke-width="2.2"/>
<path d="M452.7 184.8 L453.9 209.7 L449.1 238.2 L436.1 264.3 L421.8 288 L407.6 304.6 L393.4 321.2 L381.5 337.8 L374.4 349.7 L364.9 366.3 L360.2 373.4" stroke-width="2.2"/>
<path d="M-1.2 388.6 L16.6 412.3 L30.8 431.3 L47.4 450.3 L71.2 474 L94.9 500.1" stroke-width="2.2"/>
<path d="M270 52.7 L303.2 40.3 L319.8 32 L329.3 32 L341.2 39.1" stroke-width="2.4"/>
<path d="M310.3 187.4 L317.4 147.1 L325.8 99.6 L326.9 68.8 L334.1 47.4 L345.9 33.2 L355.4 24.9 L374.4 21.4 L388.6 14.2 L399.3 2.4 L402.9 -1.2" stroke-width="2.4"/>
<path d="M94.9 266.7 L106.8 280.9 L121 297.5 L132.9 314.1 L147.1 333.1 L154.2 340.2 L170.8 349.7 L189.8 361.6 L199.3 373.4" stroke-width="2.4"/>
<path d="M129.3 190.7 L147.1 205 L161.3 221.6 L173.2 235.8 L187.4 254.8 L199.3 271.4 L213.5 280.9 L239.6 292.8 L270 310.6" stroke-width="2.4"/>
<path d="M270 257.2 L256.2 276.2 L242 293.9 L227.8 311.7 L208.8 337.8 L194.5 361.6 L187.4 373.4" stroke-width="2.4"/>
<path d="M194.5 370.8 L180.3 386.2 L161.3 400.5 L142.3 412.3 L130.5 431.3 L118.6 455 L106.8 478.8 L99.6 500.1 L90.2 514.3 L71.2 533.3 L52.2 552.3 L47.4 559.4" stroke-width="2.4"/>
<path d="M353 379.1 L341.2 402.8 L326.9 426.6 L312.7 447.9 L308 466.9 L309.1 490.6 L315.1 514.3 L324.6 538.1 L334.1 559.4" stroke-width="2.4"/>
<path d="M267.6 465.7 L308 466.9" stroke-width="2.4"/>
<path d="M267.6 535.7 L293.7 528.6 L315.1 520.3" stroke-width="2.4"/>
<path d="M-2.4 94.9 L17.8 78.3 L33.2 64.1 L47.4 53.4 L61.7 48.6 L78.3 45.1 L97.3 43.4 L113.9 46.3 L135.2 49.8 L156.6 54.1 L177.9 58.1 L206.4 62.2 L227.8 65.2 L239.6 62.9 L270 52.2" stroke-width="2.6"/>
<path d="M128.1 184.8 L126.9 205 L116.3 231.1 L104.4 250.1 L94.9 266.7 L71.2 280.9 L52.2 293.9 L35.6 307 L19 318.9 L-2.4 330.7" stroke-width="2.6"/>
<path d="M353 502.5 L402.9 496.6 L440.8 494.2 L483.5 490.6 L521.5 488.3 L540 485.9" stroke-width="2.6"/>
<path d="M267.6 311.7 L303.2 326 L331.7 335.5 L374.4 349.7 L412.3 356.8 L469.3 362.7 L507.2 360.4 L540 355.6" stroke-width="2.8"/>
</g>
<!--/ROADS-->
<!--LABELS-->
<g font-family="Liberation Sans, sans-serif" stroke="#f6f6f4" stroke-opacity=".8" stroke-width="1.6" stroke-linejoin="round" paint-order="stroke" style="paint-order:stroke">
<text x="158.8" y="8.6" font-size="14.2" fill="#9a9a9a" font-weight="400" textLength="71.5" lengthAdjust="spacingAndGlyphs">Mascouche</text>
<text x="80.4" y="85.3" font-size="16.2" fill="#8a8a8a" font-weight="400" textLength="80.1" lengthAdjust="spacingAndGlyphs">Terrebonne</text>
<text x="372.9" y="34.3" font-size="14.5" fill="#909090" font-weight="400" textLength="72.3" lengthAdjust="spacingAndGlyphs">Repentigny</text>
<text x="0.5" y="161.7" font-size="16" fill="#8a8a8a" font-weight="400" textLength="15.5" lengthAdjust="spacingAndGlyphs">on</text>
<text x="209.3" y="174.1" font-size="11" fill="#a3a3a3" font-weight="400" textLength="83.6" lengthAdjust="spacing">RIVIÈRE-DES-</text>
<text x="223.6" y="187" font-size="11" fill="#a3a3a3" font-weight="400" textLength="55.7" lengthAdjust="spacing">PRAIRIES</text>
<text x="302.1" y="244.7" font-size="14" fill="#909090" font-weight="400" textLength="80.8" lengthAdjust="spacingAndGlyphs">Montréal-Est</text>
<text x="368.6" y="299" font-size="15" fill="#8e8e8e" font-weight="400" textLength="80.7" lengthAdjust="spacingAndGlyphs">Boucherville</text>
<text x="43.6" y="422.3" font-size="10.8" fill="#a3a3a3" font-weight="400" textLength="67.8" lengthAdjust="spacing">AHUNTSIC-</text>
<text x="35" y="435.1" font-size="10.8" fill="#a3a3a3" font-weight="400" textLength="86.4" lengthAdjust="spacing">CARTIERVILLE</text>
<text x="107.8" y="475.2" font-size="14.5" fill="#8e8e8e" font-weight="400" textLength="48.3" lengthAdjust="spacingAndGlyphs">Town of</text>
<text x="92.6" y="491.3" font-size="14.5" fill="#8e8e8e" font-weight="400" textLength="78.9" lengthAdjust="spacingAndGlyphs">Mount-Royal</text>
<text x="180.6" y="457" font-size="10.4" fill="#a3a3a3" font-weight="400" textLength="80.4" lengthAdjust="spacing">LE PLATEAU-</text>
<text x="200.9" y="470.3" font-size="10.4" fill="#a3a3a3" font-weight="400" textLength="38.0" lengthAdjust="spacing">MONT-</text>
<text x="201.4" y="483.2" font-size="10.4" fill="#a3a3a3" font-weight="400" textLength="37.5" lengthAdjust="spacing">ROYAL</text>
<text x="140.2" y="524.2" font-size="19.6" fill="#5e5e5e" textLength="78.6" lengthAdjust="spacingAndGlyphs">Montreal</text>
<text x="140.2" y="524.2" font-size="19.6" fill="#5e5e5e" font-weight="400" textLength="78.6" lengthAdjust="spacingAndGlyphs" stroke="#5e5e5e" stroke-opacity="1" stroke-width="0.2" style="paint-order:normal">Montreal</text>
<text x="54.4" y="564.1" font-size="15.2" fill="#8e8e8e" font-weight="400" textLength="95.1" lengthAdjust="spacingAndGlyphs">Côte Saint-Luc</text>
<text x="381.5" y="482" font-size="17" fill="#6a6a6a" textLength="72.3" lengthAdjust="spacingAndGlyphs">Longueuil</text>
<text x="381.5" y="482" font-size="17" fill="#6a6a6a" font-weight="400" textLength="72.3" lengthAdjust="spacingAndGlyphs" stroke="#6a6a6a" stroke-opacity="1" stroke-width="0.1" style="paint-order:normal">Longueuil</text>
<text x="279.3" y="513.4" font-size="14" fill="#909090" font-weight="400" textLength="91.2" lengthAdjust="spacingAndGlyphs">Saint-Lambert</text>
<text x="533.6" y="455" font-size="15" fill="#8e8e8e" font-weight="400" textLength="7.4" lengthAdjust="spacingAndGlyphs">S</text>
<text x="527.5" y="471.7" font-size="15" fill="#8e8e8e" font-weight="400" textLength="13.5" lengthAdjust="spacingAndGlyphs">de</text>
<text x="534.4" y="324.3" font-size="15" fill="#8e8e8e" font-weight="400" textLength="7.6" lengthAdjust="spacingAndGlyphs">S</text>
</g>
<!--/LABELS-->
<rect x=".5" y=".5" width="537" height="575" fill="none" stroke="#fff" stroke-width="1"/>
</svg>
</div>
</body>
</html>
